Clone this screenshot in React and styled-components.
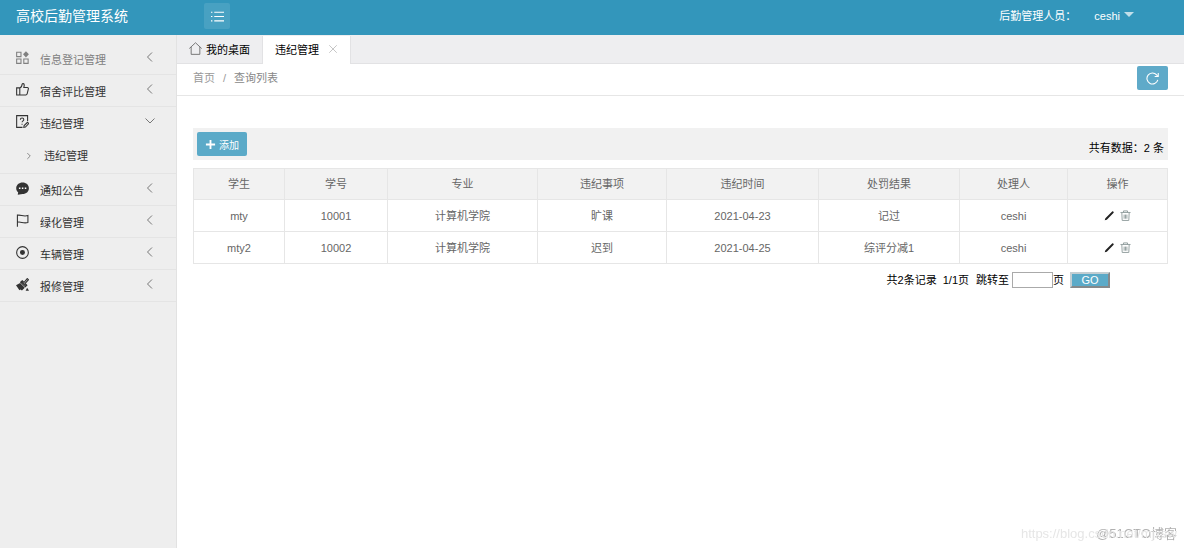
import React, { useState } from "react";
import styled, { createGlobalStyle } from "styled-components";

const GlobalStyle = createGlobalStyle`
  * {
    box-sizing: border-box;
  }

  body {
    margin: 0;
    background-color: #ffffff;
    color: #000000;
    font-family: "Liberation Sans", "Noto Sans CJK SC", sans-serif;
    font-size: 11px;
    line-height: 16px;
  }

  button, input {
    font-family: inherit;
    font-size: inherit;
  }

  a {
    color: inherit;
    text-decoration: none;
  }
`;

const PageWrap = styled.div`
  display: flex;
  flex-direction: column;
  min-height: 100vh;
`;

const Header = styled.header`
  display: flex;
  align-items: center;
  height: 35px;
  padding: 0 50px 3px 16px;
  background-color: #3396bb;
  color: #ffffff;

  h1 {
    width: 188px;
    margin: 0;
    font-size: 14px;
    font-weight: normal;
    line-height: 20px;
  }
`;

const MenuToggle = styled.button`
  display: flex;
  align-items: center;
  justify-content: center;
  width: 26px;
  height: 26px;
  padding: 0;
  border: 0;
  border-radius: 2px;
  background-color: #48a1c2;
  color: #ffffff;
`;

const UserArea = styled.div`
  display: flex;
  align-items: center;
  gap: 18px;
  margin-left: auto;
`;

const UserButton = styled.button`
  display: flex;
  align-items: center;
  gap: 4px;
  padding: 0;
  border: 0;
  background: none;
  color: inherit;

  i {
    margin-bottom: 4px;
    border: 5px solid transparent;
    border-top-color: #c1dfea;
    border-bottom: 0;
  }
`;

const Body = styled.div`
  display: flex;
  flex: 1;
`;

const Sidebar = styled.nav`
  width: 177px;
  padding-top: 8px;
  border-right: 1px solid #e2e2e2;
  background-color: #eeeeee;

  ul {
    margin: 0;
    padding: 0;
    list-style: none;
  }

  & > ul > li {
    border-bottom: 1px solid #e4e4e4;
  }
`;

const MenuButton = styled.button`
  display: flex;
  align-items: center;
  width: 100%;
  height: 31px;
  padding: 0 20px 0 16px;
  border: 0;
  background: none;
  color: ${props => (props.$muted ? "#808080" : "#333333")};
  text-align: left;

  span {
    flex: 1;
    margin-left: 11px;
  }

  svg {
    margin-bottom: 2px;
  }

  span + svg {
    margin-bottom: 4px;
    color: #777777;
  }
`;

const SubLink = styled.a`
  display: flex;
  align-items: center;
  gap: 10px;
  height: 35px;
  padding-left: 24px;
  color: #333333;

  svg {
    color: #777777;
  }
`;

const Main = styled.main`
  flex: 1;
  min-width: 0;
`;

const TabBar = styled.div`
  display: flex;
  height: 29px;
  padding-top: 1px;
  border-bottom: 1px solid #e2e2e4;
  background-color: #eeeef0;
`;

const Tab = styled.div`
  display: flex;
  align-items: center;
  height: ${props => (props.$active ? "28px" : "27px")};
  padding: 0 12px 2px;
  border-right: 1px solid #e2e2e4;
  background-color: ${props => (props.$active ? "#ffffff" : "transparent")};

  button {
    display: flex;
    align-items: center;
    gap: 4px;
    padding: 0;
    border: 0;
    background: none;
    color: #000000;
  }

  button + button {
    margin-left: 9px;
    color: #bbbbbb;
  }
`;

const Crumbs = styled.div`
  display: flex;
  align-items: center;
  justify-content: space-between;
  height: 32px;
  padding: 0 16px 3px;
  border-bottom: 1px solid #e6e6e6;
  color: #999999;

  div {
    display: flex;
    gap: 8px;
  }

  a:last-child {
    color: #888888;
  }
`;

const RefreshButton = styled.button`
  display: flex;
  align-items: center;
  justify-content: center;
  width: 31px;
  height: 24px;
  padding: 0;
  border: 0;
  border-radius: 2px;
  background-color: #5faac9;
  color: #ffffff;
`;

const Content = styled.section`
  padding: 32px 16px 0;
`;

const Toolbar = styled.div`
  display: flex;
  justify-content: space-between;
  height: 32px;
  padding: 4px;
  background-color: #f1f1f1;

  p {
    margin: 8px 0 0;
  }
`;

const AddButton = styled.button`
  display: flex;
  align-items: center;
  justify-content: center;
  gap: 3px;
  width: 50px;
  height: 24px;
  padding: 0;
  border: 0;
  border-radius: 2px;
  background-color: #5baac8;
  color: #ffffff;

  span {
    font-size: 10px;
  }
`;

const DataTable = styled.table`
  width: 100%;
  margin-top: 8px;
  table-layout: fixed;
  border-collapse: collapse;
  color: #666666;

  th,
  td {
    height: 32px;
    padding: 0;
    border: 1px solid #e6e6e6;
    font-weight: normal;
    text-align: center;
  }

  th {
    height: 31px;
    background-color: #f2f2f2;
  }
`;

const Actions = styled.div`
  display: flex;
  align-items: center;
  justify-content: center;
  gap: 5px;

  button {
    display: flex;
    padding: 0;
    border: 0;
    background: none;
    color: #222222;
  }

  button + button {
    color: #8d9a9a;
  }
`;

const Pager = styled.form`
  display: flex;
  align-items: center;
  justify-content: flex-end;
  margin-top: 8px;
  padding-right: 58px;

  span {
    margin-right: 6px;
  }

  label {
    margin-left: 1px;
  }

  input {
    width: 41px;
    height: 16px;
    margin: 0 0 0 3px;
    padding: 0 2px;
    border: 1px solid #aaaaaa;
  }

  button {
    width: 40px;
    height: 16px;
    padding: 0;
    border: 2px solid;
    border-color: #c4ced2 #85898b #85898b #c4ced2;
    background-color: #5baac8;
    color: #ffffff;
    line-height: 12px;
  }
`;

const Watermark = styled.div`
  position: fixed;
  right: 7px;
  bottom: 6px;
  color: #b0b0b0;
  font-size: 13px;
  pointer-events: none;

  span {
    position: absolute;
    right: 0;
    color: #e6e6e6;
  }
`;

const MENU = [
  { title: "信息登记管理", icon: "grid", muted: true },
  { title: "宿舍评比管理", icon: "thumb" },
  { title: "违纪管理", icon: "survey", children: ["违纪管理"] },
  { title: "通知公告", icon: "chat" },
  { title: "绿化管理", icon: "flag" },
  { title: "车辆管理", icon: "radio" },
  { title: "报修管理", icon: "brush" }
];

const COLUMNS = [
  { title: "学生", width: 91 },
  { title: "学号", width: 103 },
  { title: "专业", width: 150 },
  { title: "违纪事项", width: 129 },
  { title: "违纪时间", width: 152 },
  { title: "处罚结果", width: 141 },
  { title: "处理人", width: 108 },
  { title: "操作", width: 100 }
];

const ROWS = [
  ["mty", "10001", "计算机学院", "旷课", "2021-04-23", "记过", "ceshi"],
  ["mty2", "10002", "计算机学院", "迟到", "2021-04-25", "综评分减1", "ceshi"]
];

const SHAPES = {
  grid: (
    <>
      <path d="M.6 1.2h4v4h-4zM.6 7.4h4v4h-4zM7.2 7.4h4v4h-4z" />
      <path d="M9.2.3l2.700 2.800-2.700 2.800-2.700-2.800z" fill="currentColor" stroke="none" />
    </>
  ),
  thumb: (
    <path d="M.6 4.500h2.900v6.500H.6zM3.500 4.700c1.600-.5 2-1.700 2.100-3.500.2-1 1.900-.8 2 .6 0 .9-.2 1.700-.4 2.400h3.200c.9 0 1.200.6 1 1.300L10.300 10c-.2.6-.6 1-1.200 1H3.500" />
  ),
  survey: (
    <>
      <path d="M10.700 5.500V.6H.6v10.800H6" />
      <path d="M4 4.300c0-2.100 3.200-2.100 3.200 0 0 1.100-1.600 1.200-1.600 2.500M5.600 8v1" />
      <path d="M7.200 11.300l.3-1.500 3.100-3.100 1.200 1.200-3.100 3.200z" />
    </>
  ),
  chat: (
    <>
      <path
        d="M6.100.4c3.300 0 5.800 2.200 5.800 5.300s-2.500 5.300-5.800 5.300L1.600 11.800l.4-2.400C.8 8.400.2 7.200.2 5.700.2 2.600 2.800.4 6.100.4z"
        fill="currentColor"
        stroke="none"
      />
      <path d="M2.700 5.700h1.400M5.400 5.700h1.400M8.100 5.700h1.400" stroke="#ffffff" strokeWidth="1.400" />
    </>
  ),
  flag: <path d="M1.300.4v11.400M1.300 1.200c3.200-.9 5.400 1.700 9.700.2v6.400c-4.300 1.400-6.500-1.200-9.700-.2" />,
  radio: (
    <>
      <circle cx="6" cy="6" r="5.400" />
      <circle cx="6" cy="6" r="2.300" fill="currentColor" stroke="none" />
    </>
  ),
  brush: (
    <>
      <path d="M0 6.800l3.800-2.300 4.300 4.400-2.600 2.700-1.400-1.100-.9.700z" fill="currentColor" stroke="none" />
      <path d="M4.300 3.900l1.500-1.300L7.500 4 10.400.5l1.100 1.100-3 3.300 1.500 1.700-1.400 1.500zM5.200 3.300l4.200 4" />
      <path d="M10.300 8.900l1.700 2.800H8.900z" fill="currentColor" stroke="none" />
    </>
  ),
  left: <path d="M8 1.500L3.500 6 8 10.500" />,
  down: <path d="M1.500 3.500L6 8l4.500-4.500" />,
  right: <path d="M4 2.500L7.500 6 4 9.500" />,
  home: <path d="M.3 6L6 .7 11.700 6M2 4.600v6.800h8V4.600" stroke="#666666" strokeWidth=".8" />,
  close: <path d="M1.500 1.500l9 9M10.500 1.500l-9 9" />,
  list: <path d="M3 2h9M3 6h9M3 10h9M0 2h1.300M0 6h1.300M0 10h1.300" />,
  refresh: (
    <>
      <path d="M10.900 7.300A5.100 5.100 0 1 1 9.800 2.600l1 1.200" />
      <path d="M11.300.9v3.300H8" />
    </>
  ),
  plus: <path d="M6 1v10M1 6h10" strokeWidth="2" />,
  pencil: (
    <path d="M.8 11.300l.7-2.400 7.400-7.400c.7-.7 2.300.8 1.600 1.600L3.100 10.500z" fill="currentColor" stroke="none" />
  ),
  trash: (
    <path d="M.5 2.700h11M3.800 2.700V1h4.400v1.700M2 3l.4 8.400h7.200L10 3M4.500 5v4.500M6 5v4.500M7.500 5v4.500" />
  )
};

function Icon({ name, size = 12 }) {
  return (
    <svg
      width={size}
      height={size}
      viewBox="0 0 12 12"
      fill="none"
      stroke="currentColor"
      strokeWidth="1"
      aria-hidden="true"
    >
      {SHAPES[name]}
    </svg>
  );
}

function SideMenu() {
  const [opened, setOpened] = useState("违纪管理");

  return (
    <Sidebar>
      <ul>
        {MENU.map(item => {
          const isOpen = opened === item.title;

          return (
            <li key={item.title}>
              <MenuButton
                $muted={item.muted}
                aria-expanded={isOpen}
                onClick={() => setOpened(isOpen ? "" : item.title)}
              >
                <Icon name={item.icon} size={13} />
                <span>{item.title}</span>
                <Icon name={isOpen ? "down" : "left"} />
              </MenuButton>
              {isOpen && item.children && (
                <ul>
                  {item.children.map(child => (
                    <li key={child}>
                      <SubLink href="#list">
                        <Icon name="right" size={10} />
                        {child}
                      </SubLink>
                    </li>
                  ))}
                </ul>
              )}
            </li>
          );
        })}
      </ul>
    </Sidebar>
  );
}

function RecordTable() {
  return (
    <DataTable>
      <colgroup>
        {COLUMNS.map(col => (
          <col key={col.title} width={col.width} />
        ))}
      </colgroup>
      <thead>
        <tr>
          {COLUMNS.map(col => (
            <th key={col.title}>{col.title}</th>
          ))}
        </tr>
      </thead>
      <tbody>
        {ROWS.map(row => (
          <tr key={row[0]}>
            {row.map((cell, index) => (
              <td key={index}>{cell}</td>
            ))}
            <td>
              <Actions>
                <button aria-label="编辑">
                  <Icon name="pencil" size={11} />
                </button>
                <button aria-label="删除">
                  <Icon name="trash" size={11} />
                </button>
              </Actions>
            </td>
          </tr>
        ))}
      </tbody>
    </DataTable>
  );
}

function App() {
  return (
    <PageWrap>
      <GlobalStyle />
      <Header>
        <h1>高校后勤管理系统</h1>
        <MenuToggle aria-label="菜单">
          <Icon name="list" size={13} />
        </MenuToggle>
        <UserArea>
          <span>后勤管理人员：</span>
          <UserButton>
            ceshi
            <i />
          </UserButton>
        </UserArea>
      </Header>
      <Body>
        <SideMenu />
        <Main>
          <TabBar>
            <Tab>
              <button>
                <Icon name="home" size={13} />
                我的桌面
              </button>
            </Tab>
            <Tab $active>
              <button>违纪管理</button>
              <button aria-label="关闭">
                <Icon name="close" size={10} />
              </button>
            </Tab>
          </TabBar>
          <Crumbs>
            <div>
              <a href="#home">首页</a>
              <span>/</span>
              <a href="#list">查询列表</a>
            </div>
            <RefreshButton aria-label="刷新">
              <Icon name="refresh" size={13} />
            </RefreshButton>
          </Crumbs>
          <Content>
            <Toolbar>
              <AddButton>
                <Icon name="plus" size={11} />
                <span>添加</span>
              </AddButton>
              <p>共有数据：2 条</p>
            </Toolbar>
            <RecordTable />
            <Pager onSubmit={event => event.preventDefault()}>
              <span>共2条记录</span>
              <span>1/1页</span>
              <label htmlFor="page">跳转至</label>
              <input id="page" type="text" />
              <span>页</span>
              <button type="submit">GO</button>
            </Pager>
          </Content>
        </Main>
      </Body>
      <Watermark>
        <span>https://blog.csdn.net/mjxsw</span>
        @51CTO博客
      </Watermark>
    </PageWrap>
  );
}

export default App;
